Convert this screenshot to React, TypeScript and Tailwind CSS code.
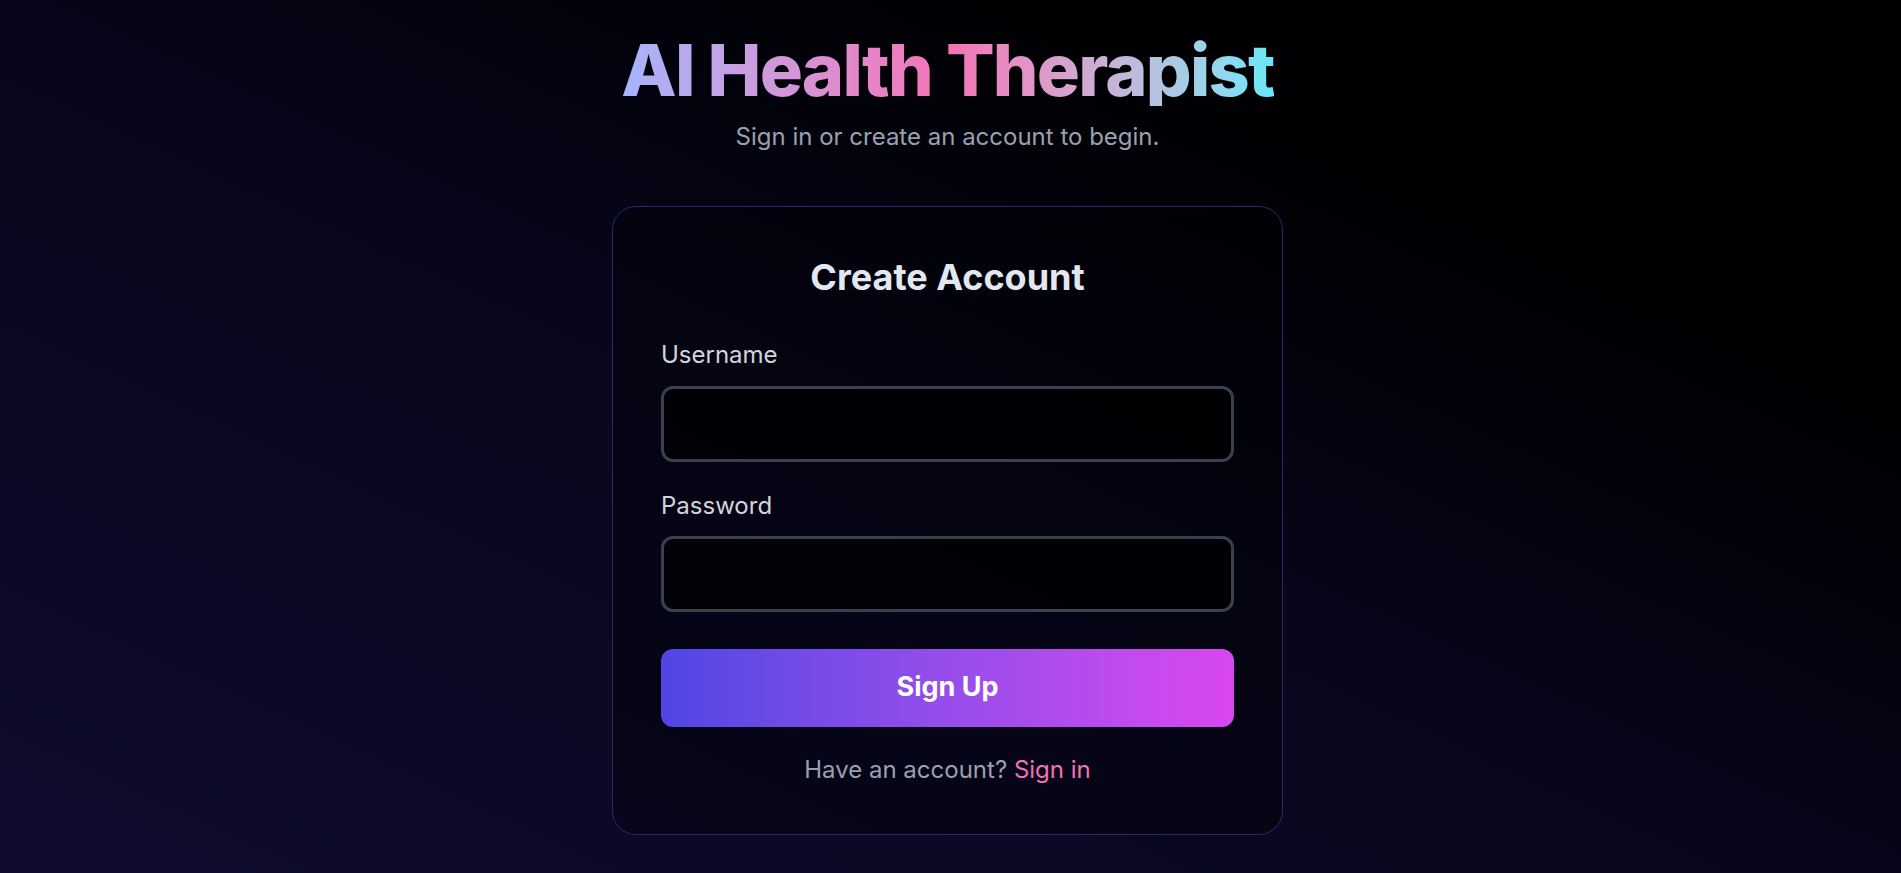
import React, { useState } from 'react';

const App = () => {
  const [username, setUsername] = useState('');
  const [password, setPassword] = useState('');

  return (
    <div
      className="min-h-screen w-full bg-linear-to-tr from-[#0f0c2e] via-[#07061a] to-black flex flex-col items-center pt-[34px] pr-[6px] pb-10"
      style={{ fontFamily: 'Inter, "Noto Sans", sans-serif' }}
    >
      {/* Header */}
      <h1 className="text-[72px] leading-none font-extrabold tracking-tight bg-linear-to-r from-[#a5b4fc] via-[#f472b6] to-[#67e8f9] bg-clip-text text-transparent">
        AI Health Therapist
      </h1>
      <p className="mt-3 text-[24px] leading-[37.5px] text-gray-400">
        Sign in or create an account to begin.
      </p>

      {/* Auth card */}
      <div className="mt-[50px] w-[671px] rounded-3xl border border-[#2a2670] bg-black/30 px-12 pt-12 pb-[46px]">
        <h2 className="mt-[2px] text-center text-4xl font-bold text-slate-200">Create Account</h2>

        <form className="mt-[39px] flex flex-col" onSubmit={e => e.preventDefault()}>
          <label className="text-[24px] leading-[37.5px] text-gray-300">Username</label>
          <input
            value={username}
            onChange={e => setUsername(e.target.value)}
            className="mt-[13px] h-[76px] w-full rounded-xl border-[3px] border-[#3a414e] bg-black/70 px-4 text-[24px] text-white outline-none"
          />

          <label className="mt-[25px] text-[24px] leading-[37.5px] text-gray-300">Password</label>
          <input
            type="password"
            value={password}
            onChange={e => setPassword(e.target.value)}
            className="mt-[11px] h-[76px] w-full rounded-xl border-[3px] border-[#3a414e] bg-black/70 px-4 text-[24px] text-white outline-none"
          />

          <button
            type="submit"
            className="mt-[37px] h-[78px] w-full rounded-xl bg-linear-to-r from-[#4f46e5] to-[#d946ef] text-[27px] font-bold text-white"
          >
            Sign Up
          </button>
        </form>

        <p className="mt-[24px] text-center text-[24px] leading-[37.5px] text-gray-400">
          Have an account? <a href="#" className="text-[#f472b6]">Sign in</a>
        </p>
      </div>
    </div>
  );
};

export default App;
